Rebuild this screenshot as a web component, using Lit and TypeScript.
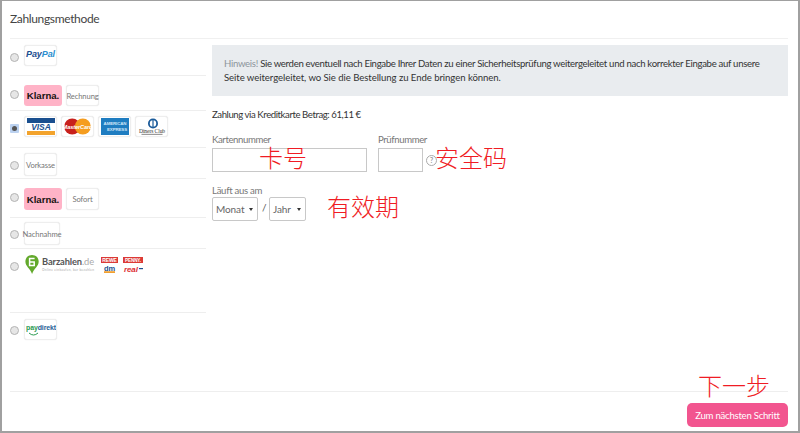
import { LitElement, html, css } from "lit";
import { customElement } from "lit/decorators.js";

const visa = html`<svg width="28" height="17" viewBox="0 0 28 17"><rect width="28" height="5" fill="#1a4f8f"/><rect y="13" width="28" height="4" fill="#f3a32c"/><text x="14" y="12.2" text-anchor="middle" font-family="Liberation Sans" font-size="8.5" font-weight="700" font-style="italic" fill="#1a4f8f">VISA</text></svg>`;
const mc = html`<svg width="27" height="17" viewBox="0 0 27 17"><circle cx="8.2" cy="8.5" r="8" fill="#c8201c"/><circle cx="18.8" cy="8.5" r="8" fill="#f59d1f"/><text x="13.5" y="10.6" text-anchor="middle" font-family="Liberation Sans" font-size="5.6" font-weight="700" font-style="italic" fill="#fff">MasterCard</text></svg>`;
const amex = html`<svg width="28" height="17" viewBox="0 0 28 17"><rect width="28" height="17" fill="#1f7dc1"/><text x="14" y="7.2" text-anchor="middle" font-family="Liberation Sans" font-size="4.4" font-weight="700" fill="#cfe6f7">AMERICAN</text><text x="16" y="13" text-anchor="middle" font-family="Liberation Sans" font-size="4.4" font-weight="700" fill="#cfe6f7">EXPRESS</text></svg>`;
const diners = html`<svg width="28" height="18" viewBox="0 0 28 18"><circle cx="15" cy="5.5" r="5" fill="#1b5b9a"/><circle cx="15" cy="5.5" r="3.2" fill="#fff"/><rect x="14.4" y="2" width="1.2" height="7" fill="#1b5b9a"/><text x="14" y="14.6" text-anchor="middle" font-family="Liberation Serif" font-size="5.6" fill="#333">Diners Club</text><rect x="3.5" y="15.8" width="21" height="1.2" fill="#999"/></svg>`;
const pay = html`<svg width="30" height="16" viewBox="0 0 30 16"><text x="0" y="8" font-family="Liberation Sans" font-size="7.4" font-weight="700" fill="#2a9a4f" textLength="30" lengthAdjust="spacingAndGlyphs">pay<tspan fill="#1f5f96">direkt</tspan></text><path d="M3 11 Q7.5 15 12 11" fill="none" stroke="#2a9a4f" stroke-width="1"/></svg>`;
const bar = html`<svg width="72" height="22" viewBox="0 0 72 22">
  <path d="M8 1 C11.8 1 14.7 3.8 14.7 7.6 C14.7 12.4 10 14.4 8.1 20 C6 14.4 1.4 12.4 1.4 7.6 C1.4 3.8 4.2 1 8 1Z" fill="#63a92c"/>
  <path d="M10.6 4.6H5.6V11.6H10.2V8H5.8" fill="none" stroke="#fff" stroke-width="1.5"/>
  <text x="18" y="11" font-family="Lato" font-size="9.6" font-weight="700" fill="#555" textLength="52" lengthAdjust="spacingAndGlyphs">Barzahlen<tspan fill="#aaa" font-weight="400">.de</tspan></text>
  <text x="18" y="16.5" font-family="Lato" font-size="3.2" fill="#aaa" textLength="52">Online einkaufen, bar bezahlen</text>
</svg>`;
const stores = html`<svg width="44" height="20" viewBox="0 0 44 20">
  <rect x="0" y="0" width="17" height="6" fill="#dc3a36"/><text x="8.5" y="4.9" text-anchor="middle" font-family="Liberation Sans" font-size="5" font-weight="700" fill="#fff">REWE</text>
  <rect x="22" y="0" width="20" height="6" fill="#dc3a36"/><text x="32" y="4.9" text-anchor="middle" font-family="Liberation Sans" font-size="4.6" font-weight="700" fill="#fff">PENNY.</text>
  <text x="8.5" y="13.5" text-anchor="middle" font-family="Liberation Sans" font-size="7.5" font-weight="700" fill="#1a4f8f">dm</text>
  <rect x="3" y="14.2" width="11" height="1.8" fill="#f0a030"/>
  <text x="23" y="15" font-family="Liberation Sans" font-size="8" font-weight="700" font-style="italic" fill="#dc2b30">real</text><rect x="38" y="11" width="4" height="1.2" fill="#1a4f8f"/>
</svg>`;

@customElement("app-root")
export class AppRoot extends LitElement {
  static styles = css`
    :host { display: block; width: 800px; height: 433px; box-sizing: border-box; border: 2px solid #a0a0a0; border-top-width: 1px; background: #fff; font-family: Lato, "Noto Sans", sans-serif; color: #333; position: relative; overflow: hidden; }
    .page { height: 100%; display: flex; flex-direction: column; padding: 0 10px 0 8px; }
    h1 { margin: 0; height: 38px; box-sizing: border-box; padding-top: 10px; font-size: 12px; line-height: 16px; font-weight: 400; color: #444; border-bottom: 1px solid #f0f0f0; letter-spacing: -.35px; }
    .main { display: flex; flex: 1; gap: 6px; }
    .methods { width: 196px; flex: none; }
    .row { display: flex; box-sizing: border-box; border-bottom: 1px solid #eee; padding-left: 14px; gap: 4px; position: relative; align-items: flex-start; }
    .row:last-child { border-bottom: 0; }
    .radio { position: absolute; left: 0; box-sizing: border-box; width: 9px; height: 9px; border-radius: 50%; background: #e6e6e6; border: 1px solid #b4b4b4; }
    .radio.on { border-radius: 1px; background: #bcd2f0; border: 0; display: flex; align-items: center; justify-content: center; }
    .radio.on::after { content: ""; width: 5px; height: 5px; border-radius: 50%; background: #555; }
    .logo { box-sizing: border-box; width: 33px; height: 21px; border: 1px solid #eee; border-radius: 3px; display: flex; align-items: center; justify-content: center; font-size: 7.6px; letter-spacing: -.1px; color: #777; white-space: nowrap; background: #fff; box-shadow: 0 0 1px #ddd; }
    .mid { height: 22px; }
    .tall { height: 23px; }
    .wide { width: 36px; }
    .klarna { width: 38px; background: #ffb3c7; border: 0; border-radius: 3px; color: #17120f; font-weight: 700; font-size: 9.6px; font-family: "Liberation Sans", sans-serif; box-shadow: none; letter-spacing: 0; }
    .paypal { font-family: "Liberation Sans", sans-serif; font-weight: 700; font-style: italic; font-size: 9px; color: #1d4f91; padding-bottom: 3px; }
    .paypal b { color: #2b8fd0; }
    .plain { border: 0; box-shadow: none; width: auto; height: auto; }
    .stores { margin: 3px 0 0 1px; }
    .content { flex: 1; padding-top: 6px; min-width: 0; }
    .alert { background: #e9ecef; height: 51px; box-sizing: border-box; padding: 12px 12px; font-size: 9.6px; line-height: 14px; color: #333; white-space: nowrap; }
    .alert em { font-style: normal; color: #8c959c; }
    .l1 { letter-spacing: -.31px; }
    .l2 { letter-spacing: -.07px; }
    .sum { font-size: 9.6px; letter-spacing: -.43px; line-height: 14px; margin-top: 12px; }
    .fields { display: flex; gap: 11px; margin-top: 12px; }
    label { display: block; font-size: 9.6px; letter-spacing: -.4px; line-height: 12px; color: #777; margin-bottom: 2px; }
    .input { box-sizing: border-box; height: 24px; border: 1px solid #c8c8c8; background: #fff; }
    .w1 { width: 155px; } .w2 { width: 45px; }
    .cvc { display: flex; align-items: center; gap: 3px; }
    .help { box-sizing: border-box; width: 11px; height: 11px; border-radius: 50%; border: 1px solid #aaa; color: #999; font-size: 7px; line-height: 9px; text-align: center; font-weight: 700; }
    .expiry { margin-top: 13px; }
    .expiry label { margin-bottom: 0; letter-spacing: -.3px; }
    .selects { display: flex; align-items: center; gap: 4px; }
    .select { box-sizing: border-box; height: 24px; border: 1px solid #c8c8c8; border-radius: 2px; display: flex; align-items: center; justify-content: space-between; padding: 0 4px 0 3px; font-size: 10px; letter-spacing: -.1px; color: #666; }
    .select::after { content: ""; border: 2.5px solid transparent; border-top: 3.5px solid #333; border-bottom: 0; }
    .s1 { width: 46px; } .s2 { width: 37px; }
    .slash { width: 3px; font-size: 10px; color: #555; margin-top: -5px; }
    .foot { height: 40px; box-sizing: border-box; border-top: 1px solid #eee; display: flex; justify-content: flex-end; padding-top: 11px; }
    button { width: 101px; height: 24px; padding: 0; border: 0; border-radius: 5px; background: #f2558f; color: #fff; font: 9.6px Lato, sans-serif; letter-spacing: -.25px; }
    .note { position: absolute; color: #f01c24; font-family: "Noto Sans CJK SC", sans-serif; font-weight: 300; font-size: 24px; line-height: 24px; white-space: nowrap; }
  `;
  render() {
    const row = (h: number, pt: number, ry: number, body: unknown, on = false) =>
      html`<div class="row" style="height:${h}px;padding-top:${pt}px"><span class="radio ${on ? "on" : ""}" style="top:${ry}px"></span>${body}</div>`;
    return html`
      <div class="page">
        <h1>Zahlungsmethode</h1>
        <div class="main">
          <div class="methods">
            ${row(37, 6, 14, html`<span class="logo paypal">Pay<b>Pal</b></span>`)}
            ${row(35, 9, 14, html`<span class="logo klarna">Klarna.</span><span class="logo">Rechnung</span>`)}
            ${row(37, 5, 13, html`<span class="logo">${visa}</span><span class="logo">${mc}</span><span class="logo">${amex}</span><span class="logo">${diners}</span>`, true)}
            ${row(31, 5, 13, html`<span class="logo tall">Vorkasse</span>`)}
            ${row(39, 9, 14, html`<span class="logo klarna mid">Klarna.</span><span class="logo mid">Sofort</span>`)}
            ${row(31, 4, 12, html`<span class="logo wide tall">Nachnahme</span>`)}
            ${row(64, 5, 13, html`<span class="plain logo">${bar}</span><span class="plain logo stores">${stores}</span>`)}
            ${row(60, 6, 13, html`<span class="logo">${pay}</span>`)}
          </div>
          <div class="content">
            <div class="alert"><span class="l1"><em>Hinweis!</em> Sie werden eventuell nach Eingabe Ihrer Daten zu einer Sicherheitsprüfung weitergeleitet und nach korrekter Eingabe auf unsere</span><br><span class="l2">Seite weitergeleitet, wo Sie die Bestellung zu Ende bringen können.</span></div>
            <div class="sum">Zahlung via Kreditkarte Betrag: 61,11 €</div>
            <div class="fields">
              <div><label>Kartennummer</label><div class="input w1"></div></div>
              <div><label>Prüfnummer</label><div class="cvc"><div class="input w2"></div><span class="help">?</span></div></div>
            </div>
            <div class="expiry">
              <label>Läuft aus am</label>
              <div class="selects"><div class="select s1">Monat</div><span class="slash">/</span><div class="select s2">Jahr</div></div>
            </div>
          </div>
        </div>
        <div class="foot"><button>Zum nächsten Schritt</button></div>
      </div>
      <span class="note" style="left:257px;top:144px">卡号</span>
      <span class="note" style="left:433px;top:144px">安全码</span>
      <span class="note" style="left:325px;top:193px">有效期</span>
      <span class="note" style="left:696px;top:372px">下一步</span>
    `;
  }
}
